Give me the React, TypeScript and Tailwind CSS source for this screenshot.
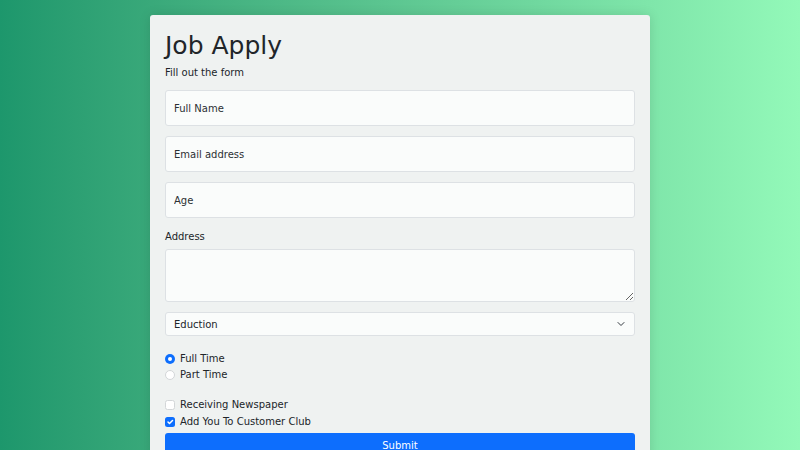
import React from 'react';

const font = { fontFamily: '"DejaVu Sans", "Liberation Sans", sans-serif' };

const FloatingField = ({ label, type = 'text' }: { label: string; type?: string }) => (
  <input
    type={type}
    placeholder={label}
    className="block w-full h-[36px] mb-[10px] px-[8px] rounded-[3px] border border-[#dde1e4] bg-[#fafcfb] text-[10px] text-[#212529] placeholder:text-[#2c3033] outline-none"
  />
);

const Radio = ({ label, checked }: { label: string; checked?: boolean }) => (
  <label className="flex items-start h-[15px] mb-[1px] text-[10px] leading-[15px] text-[#212529]">
    <span
      className={
        checked
          ? 'mt-[2.5px] w-[10px] h-[10px] rounded-full bg-[#0d6efd] flex items-center justify-center shrink-0'
          : 'mt-[2.5px] w-[10px] h-[10px] rounded-full bg-white border border-[#d3d6d8] shrink-0'
      }
    >
      {checked && <span className="w-[4px] h-[4px] rounded-full bg-white" />}
    </span>
    <span className="ml-[5px]">{label}</span>
  </label>
);

const Check = ({ label, checked }: { label: string; checked?: boolean }) => (
  <label className="flex items-start h-[15px] mb-[2px] text-[10px] leading-[15px] text-[#212529]">
    {checked ? (
      <span className="mt-[2.5px] w-[10px] h-[10px] rounded-[2.5px] bg-[#0d6efd] shrink-0 flex items-center justify-center">
        <svg viewBox="0 0 20 20" className="w-[10px] h-[10px]">
          <path d="m6 10 3 3 6-6" fill="none" stroke="#fff" strokeWidth="3" strokeLinecap="round" strokeLinejoin="round" />
        </svg>
      </span>
    ) : (
      <span className="mt-[2.5px] w-[10px] h-[10px] rounded-[2.5px] bg-white border border-[#d3d6d8] shrink-0" />
    )}
    <span className="ml-[5px]">{label}</span>
  </label>
);

export default function App() {
  return (
    <div
      className="h-screen overflow-hidden bg-gradient-to-r from-[#1d976c] to-[#93f9b9] pt-[15px]"
      style={font}
    >
      <div className="w-[500px] mx-auto bg-[#eff2f1] rounded-[3px] shadow-[0_0_12px_rgba(0,0,0,0.12)] px-[15px] pt-[16px] pb-[20px]">
        <h1 className="text-[25px] leading-[30px] text-[#212529] mb-[4px]">Job Apply</h1>
        <p className="text-[10px] leading-[15px] text-[#212529] mb-[10px]">Fill out the form</p>

        <FloatingField label="Full Name" />
        <FloatingField label="Email address" type="email" />
        <FloatingField label="Age" />

        <label className="block text-[10px] leading-[15px] text-[#212529] mb-[5px] pt-[1px]">Address</label>
        <textarea className="block w-full h-[53px] mb-[10px] rounded-[3px] border border-[#dde1e4] bg-[#fafcfb] outline-none" />

        <div className="relative h-[24px]">
          <select className="block appearance-none w-full h-[24px] pl-[8px] rounded-[3px] border border-[#dde1e4] bg-[#fafcfb] text-[10px] text-[#212529] outline-none">
            <option>Eduction</option>
          </select>
          <svg viewBox="0 0 16 16" className="absolute right-[10px] top-[8px] w-[8px] h-[8px] pointer-events-none">
            <path d="m2 5 6 6 6-6" fill="none" stroke="#343a40" strokeWidth="2" strokeLinecap="round" strokeLinejoin="round" />
          </svg>
        </div>

        <div className="mt-[15px]">
          <Radio label="Full Time" checked />
          <Radio label="Part Time" />
        </div>

        <div className="mt-[15px]">
          <Check label="Receiving Newspaper" />
          <Check label="Add You To Customer Club" checked />
        </div>

        <button className="block mt-[4px] w-full h-[24px] rounded-[3px] bg-[#0d6efd] text-white text-[10px]">Submit</button>
      </div>
    </div>
  );
}
